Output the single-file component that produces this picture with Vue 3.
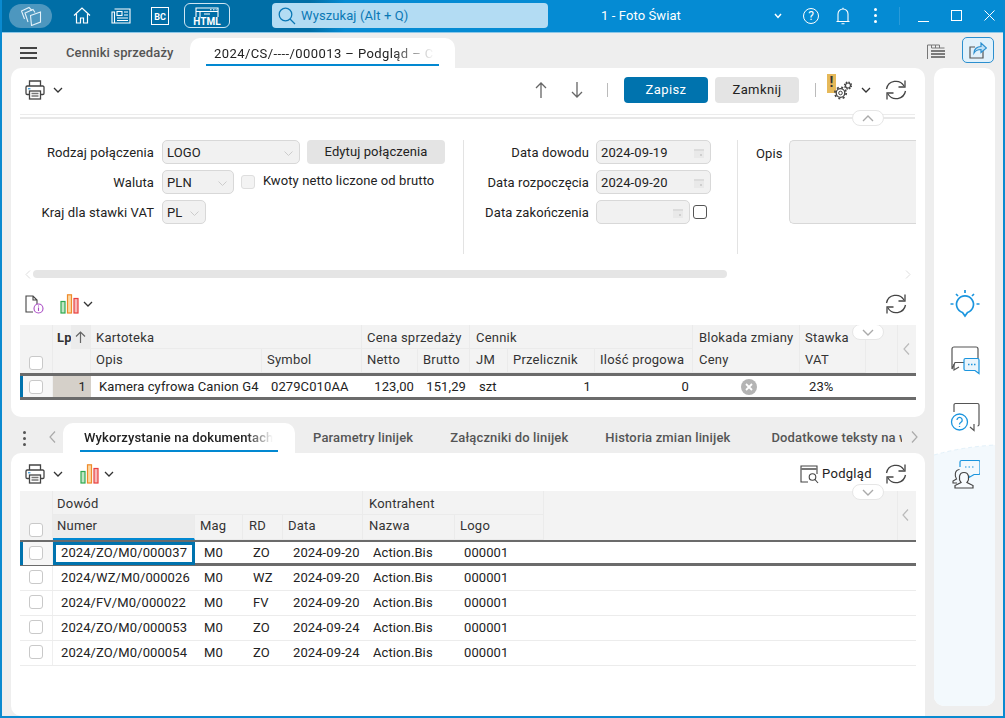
<script setup>
const upperHead = [
  { t: 'Opis' }, { t: 'Symbol' }, { t: 'Netto' }, { t: 'Brutto' },
  { t: 'JM', c: 'p6' }, { t: 'Przelicznik' }, { t: 'Ilość progowa' }, { t: 'Ceny', c: 'p6' }, { t: 'VAT' }
]
const lowerRows = [
  ['2024/ZO/M0/000037', 'M0', 'ZO', '2024-09-20', 'Action.Bis', '000001'],
  ['2024/WZ/M0/000026', 'M0', 'WZ', '2024-09-20', 'Action.Bis', '000001'],
  ['2024/FV/M0/000022', 'M0', 'FV', '2024-09-20', 'Action.Bis', '000001'],
  ['2024/ZO/M0/000053', 'M0', 'ZO', '2024-09-24', 'Action.Bis', '000001'],
  ['2024/ZO/M0/000054', 'M0', 'ZO', '2024-09-24', 'Action.Bis', '000001']
]
const lowerTabs = ['Parametry linijek', 'Załączniki do linijek', 'Historia zmian linijek']
</script>

<template>
  <div class="win">
    <svg width="0" height="0" class="defs">
      <defs>
        <symbol id="i-print" viewBox="0 0 20 20">
          <g fill="none" stroke="#444" stroke-width="1.3">
            <path d="M4.5 6V1h11v5" />
            <path d="M4.5 14.5H2.2A1.2 1.2 0 0 1 1 13.3V7.2A1.2 1.2 0 0 1 2.2 6h15.6A1.2 1.2 0 0 1 19 7.2v6.1a1.2 1.2 0 0 1-1.2 1.2h-2.3" />
            <rect x="4.5" y="11" width="11" height="8" />
            <path d="M6.5 13.5h7M6.5 16h7" stroke="#777" />
          </g>
          <rect x="3" y="8" width="2.4" height="1.4" fill="#4aa3df" />
        </symbol>
        <symbol id="i-refresh" viewBox="0 0 22 22">
          <g fill="none" stroke="#444" stroke-width="1.3">
            <path d="M1.5 10A9.5 9.5 0 0 1 19 7" />
            <path d="M20 1.5V8h-6.5" />
            <path d="M20.5 12A9.5 9.5 0 0 1 3 15" />
            <path d="M2 20.5V14h6.5" />
          </g>
        </symbol>
        <symbol id="i-chev" viewBox="0 0 10 6">
          <path d="M1 1l4 4 4-4" fill="none" stroke="#333" stroke-width="1.3" />
        </symbol>
        <symbol id="i-bars" viewBox="0 0 20 20">
          <rect x="1" y="7.5" width="4" height="11.5" fill="#bfe5c6" stroke="#2fa84f" stroke-width="1.2" />
          <rect x="7.5" y="0.8" width="4" height="18.2" fill="#fbd9a5" stroke="#ef8a2b" stroke-width="1.2" />
          <rect x="14" y="4.5" width="4" height="14.5" fill="#f7b9b9" stroke="#e8403f" stroke-width="1.2" />
        </symbol>
        <symbol id="i-pillchev" viewBox="0 0 12 7">
          <path d="M1 1l5 5 5-5" fill="none" stroke="#aaa" stroke-width="1.4" />
        </symbol>
        <symbol id="i-pillup" viewBox="0 0 12 7">
          <path d="M1 6l5-5 5 5" fill="none" stroke="#aaa" stroke-width="1.4" />
        </symbol>
        <symbol id="i-cal" viewBox="0 0 12 12">
          <path d="M1 2h10v9H1z" fill="#e9e9e9" />
          <path d="M1 2h10v2H1z" fill="#dcdcdc" />
          <rect x="7" y="7" width="2" height="2" fill="#cfcfcf" />
        </symbol>
      </defs>
    </svg>

    <header class="top">
      <button class="stack">
        <svg width="22" height="20" viewBox="0 0 22 20" fill="none" stroke="#e3f1f9" stroke-width="1.1">
          <path d="M4.5 13L1.500 5 9 1.500l3 3" />
          <path d="M8 16L5 7l8-3.500 2 3" />
          <path d="M10.500 9.500L20.500 6v10L11.500 19.500z" fill="#4d97bf" />
        </svg>
      </button>
      <svg class="home" width="18" height="17" viewBox="0 0 18 17" fill="none" stroke="#fff" stroke-width="1.2">
        <path d="M1 8.5L9 1l8 7.5" /><path d="M3.5 7v9h4v-5h3v5h4V7" />
      </svg>
      <svg class="news" width="20" height="16" viewBox="0 0 20 16" fill="none" stroke="#fff" stroke-width="1.1">
        <path d="M3.5 1H19v14H1V4h2.5v11" />
        <rect x="6" y="3.5" width="5" height="4" /><path d="M13 4h4M13 7h4M6 10h11M6 12.5h11" />
      </svg>
      <div class="bc">BC</div>
      <div class="htmlbtn">
        <svg width="24" height="13" viewBox="0 0 24 13" fill="none" stroke="#fff" stroke-width="1.1">
          <path d="M1 10V1h22v9" /><path d="M1 4.5h22M5 4.5V10M9 7h6" /><path d="M15 2.7h1.5M18 2.7h1.5M20.7 2.7h1" />
        </svg>
        <span>HTML</span>
      </div>
      <div class="search">
        <svg width="18" height="18" viewBox="0 0 18 18" fill="none" stroke="#0a78b5" stroke-width="1.3">
          <circle cx="7.5" cy="7.5" r="6.3" /><path d="M12 12l5 5" />
        </svg>
        <span>Wyszukaj (Alt + Q)</span>
      </div>
      <div class="title">1 - Foto Świat</div>
      <svg class="t-chev" width="8" height="6" viewBox="0 0 8 6"><path d="M1 1l3 3.4L7 1" fill="none" stroke="#fff" stroke-width="1.5" /></svg>
      <div class="help">?</div>
      <svg class="bell" width="14" height="18" viewBox="0 0 14 18" fill="none" stroke="#fff" stroke-width="1.1">
        <path d="M.5 14.5h13M2 14.5V7a5 5 0 0 1 10 0v7.5" /><path d="M7 2V.8M5.5 16.8h3" />
      </svg>
      <div class="dots"><i></i><i></i><i></i></div>
      <div class="t-sep"></div>
      <div class="wmin"></div>
      <div class="wmax"></div>
      <svg class="wclose" width="11" height="11" viewBox="0 0 11 11"><path d="M.5.5l10 10M10.5.5l-10 10" stroke="#fff" stroke-width="1" /></svg>
    </header>

    <div class="tabs">
      <div class="burger"><i></i><i></i><i></i></div>
      <div class="tab-inactive">Cenniki sprzedaży</div>
      <div class="tab-active">
        <span>2024/CS/----/000013 – Podgląd – Cennik</span>
      </div>
      <svg class="listicon" width="18" height="16" viewBox="0 0 18 16" fill="none" stroke="#555" stroke-width="1">
        <path d="M.5 15V1h4v3h13M4.5 1h4v3M8.5 1h4v3" stroke="#777" /><path d="M4 7h14M4 10h14M4 13h14" stroke-width="1.4" />
      </svg>
      <div class="share">
        <svg width="18" height="17" viewBox="0 0 18 17" fill="none" stroke="#2b8fcf" stroke-width="1.2">
          <path d="M14 9v7H1V5h5" stroke="#555" /><path d="M5 11c0-4 3-6.500 7-6.500V1l5.500 5L12 10.500V7.500c-3 0-5.500 1-7 3.500z" fill="#bfe0f5" />
        </svg>
      </div>
    </div>

    <div class="content">
      <main class="main">
        <section class="panel upper">
          <div class="bar1">
            <svg class="ic20"><use href="#i-print" /></svg>
            <svg class="chev ml9"><use href="#i-chev" /></svg>
            <svg class="arrow au" width="12" height="16" viewBox="0 0 12 16" fill="none" stroke="#666" stroke-width="1.3"><path d="M6 16V1M1 6l5-5 5 5" /></svg>
            <svg class="arrow ad" width="12" height="16" viewBox="0 0 12 16" fill="none" stroke="#666" stroke-width="1.3"><path d="M6 0v15M1 10l5 5 5-5" /></svg>
            <div class="vbar b1"></div>
            <button class="btn primary">Zapisz</button>
            <button class="btn">Zamknij</button>
            <div class="vbar b2"></div>
            <div class="warn">!</div>
            <svg class="gears" width="18" height="19" viewBox="0 0 18 19" fill="none" stroke="#444">
              <circle cx="6.500" cy="12" r="4.300" stroke-width="1.300" />
              <circle cx="6.500" cy="12" r="5.700" stroke-width="1.700" stroke-dasharray="2 2.480" />
              <circle cx="6.500" cy="12" r="1.800" stroke-width="1" />
              <circle cx="14" cy="4.500" r="2.500" stroke-width="1.200" />
              <circle cx="14" cy="4.500" r="3.500" stroke-width="1.300" stroke-dasharray="1.500 1.250" />
            </svg>
            <svg class="chev gchev"><use href="#i-chev" /></svg>
            <svg class="ic22 rf"><use href="#i-refresh" /></svg>
          </div>
          <div class="divider">
            <div class="pill"><svg width="12" height="7"><use href="#i-pillup" /></svg></div>
          </div>

          <div class="form">
            <div class="col1">
              <div class="frow">
                <label>Rodzaj połączenia</label>
                <div class="sel w138">LOGO<svg class="sc" width="9" height="5" viewBox="0 0 9 5"><path d="M.5.5l4 4 4-4" fill="none" stroke="#ccc" /></svg></div>
                <button class="edit">Edytuj połączenia</button>
              </div>
              <div class="frow">
                <label>Waluta</label>
                <div class="sel w72">PLN<svg class="sc" width="9" height="5" viewBox="0 0 9 5"><path d="M.5.5l4 4 4-4" fill="none" stroke="#ccc" /></svg></div>
                <span class="cb light ml7"></span>
                <span class="cbtext">Kwoty netto liczone od brutto</span>
              </div>
              <div class="frow">
                <label>Kraj dla stawki VAT</label>
                <div class="sel w44">PL<svg class="sc" width="9" height="5" viewBox="0 0 9 5"><path d="M.5.5l4 4 4-4" fill="none" stroke="#ccc" /></svg></div>
              </div>
            </div>
            <div class="col2">
              <div class="frow">
                <label>Data dowodu</label>
                <div class="date w115">2024-09-19<svg class="cal"><use href="#i-cal" /></svg></div>
              </div>
              <div class="frow">
                <label>Data rozpoczęcia</label>
                <div class="date w115">2024-09-20<svg class="cal"><use href="#i-cal" /></svg></div>
              </div>
              <div class="frow">
                <label>Data zakończenia</label>
                <div class="date w94"><svg class="cal"><use href="#i-cal" /></svg></div>
                <span class="cb dark"></span>
              </div>
            </div>
            <div class="col3">
              <span class="opis">Opis</span>
              <div class="area"></div>
            </div>
          </div>

          <div class="hscroll">
            <svg width="6" height="9" viewBox="0 0 6 9"><path d="M5 .5l-4 4 4 4" fill="none" stroke="#ddd" /></svg>
            <div class="thumb"></div>
            <svg class="hr" width="6" height="9" viewBox="0 0 6 9"><path d="M1 .5l4 4-4 4" fill="none" stroke="#ddd" /></svg>
          </div>

          <div class="bar2">
            <svg class="docinfo" width="19" height="19" viewBox="0 0 19 19" fill="none">
              <path d="M8 17H1V1h7l4 4v4M8 1v4h4" stroke="#444" stroke-width="1.100" />
              <circle cx="13.500" cy="13.500" r="4.500" stroke="#a94bc4" stroke-width="1.100" fill="#fff" />
              <path d="M13.500 12.500v3.500M13.500 10.500v1" stroke="#a94bc4" stroke-width="1.100" />
            </svg>
            <svg class="ic20 bars1"><use href="#i-bars" /></svg>
            <svg class="chev ml5 c3"><use href="#i-chev" /></svg>
            <svg class="ic22 rf2"><use href="#i-refresh" /></svg>
          </div>

          <div class="table">
            <div class="head uhead">
              <div class="h chk"><span class="cb"></span></div>
              <div class="h lp"><span>Lp</span><b><svg width="11" height="12" viewBox="0 0 11 12" fill="none" stroke="#666" stroke-width="1.200"><path d="M5.500 12V1M1 5.500l4.500-4.500 4.500 4.500" /></svg></b></div>
              <div class="h g s2">Kartoteka</div>
              <div class="h g s2">Cena sprzedaży</div>
              <div class="h g s3 p6">Cennik</div>
              <div class="h g noln p6">Blokada zmiany</div>
              <div class="h g noln">Stawka</div>
              <div class="h rs2"></div>
              <div class="h rs2 back"><svg width="7" height="12" viewBox="0 0 7 12"><path d="M6 .5L1 6l5 5.500" fill="none" stroke="#bbb" stroke-width="1.200" /></svg></div>
              <div v-for="h in upperHead" :key="h.t" class="h sub" :class="h.c">{{ h.t }}</div>
            </div>
            <div class="urow selrow">
              <div class="c chkc"><span class="cb"></span></div>
              <div class="c lpc">1</div>
              <div class="c p8">Kamera cyfrowa Canion G4</div>
              <div class="c p9">0279C010AA</div>
              <div class="c ra">123,00</div>
              <div class="c ra">151,29</div>
              <div class="c p9">szt</div>
              <div class="c ra">1</div>
              <div class="c ra">0</div>
              <div class="c ctr"><span class="xbtn"><svg width="8" height="8" viewBox="0 0 8 8"><path d="M1 1l6 6M7 1L1 7" stroke="#fff" stroke-width="1.800" /></svg></span></div>
              <div class="c p9">23%</div>
            </div>
            <div class="pill pilltable"><svg width="12" height="7"><use href="#i-pillchev" /></svg></div>
          </div>
        </section>

        <nav class="ltabs">
          <div class="ldots"><i></i><i></i><i></i></div>
          <svg class="lback" width="7" height="12" viewBox="0 0 7 12"><path d="M6 .5L1 6l5 5.500" fill="none" stroke="#aaa" stroke-width="1.200" /></svg>
          <div class="ltab-active"><span>Wykorzystanie na dokumentach</span></div>
          <div v-for="(t, i) in lowerTabs" :key="t" class="ltab" :class="{ first: i === 0 }">{{ t }}</div>
          <div class="ltab clip">Dodatkowe teksty na wydruk</div>
          <svg class="lfwd" width="7" height="12" viewBox="0 0 7 12"><path d="M1 .5L6 6l-5 5.500" fill="none" stroke="#aaa" stroke-width="1.200" /></svg>
        </nav>

        <section class="panel lower">
          <div class="bar3">
            <svg class="ic20"><use href="#i-print" /></svg>
            <svg class="chev ml9"><use href="#i-chev" /></svg>
            <svg class="ic20 bars2"><use href="#i-bars" /></svg>
            <svg class="chev ml5"><use href="#i-chev" /></svg>
            <svg class="pview" width="19" height="19" viewBox="0 0 19 19" fill="none" stroke="#444" stroke-width="1.100">
              <path d="M8 17H1V1h16v8" /><path d="M1 4h16" stroke-width="2" stroke="#777" />
              <circle cx="12.500" cy="12" r="3.300" /><path d="M15 14.500l3 3.500" />
            </svg>
            <span class="ptext">Podgląd</span>
            <svg class="ic22 rf3"><use href="#i-refresh" /></svg>
          </div>
          <div class="table t2">
            <div class="head lhead">
              <div class="h chk"><span class="cb"></span></div>
              <div class="h g s4 p4">Dowód</div>
              <div class="h g s2 p6">Kontrahent</div>
              <div class="h rs2 blank"></div>
              <div class="h rs2 back"><svg width="7" height="12" viewBox="0 0 7 12"><path d="M6 .5L1 6l5 5.500" fill="none" stroke="#bbb" stroke-width="1.200" /></svg></div>
              <div class="h sub numer p4">Numer</div>
              <div class="h sub">Mag</div>
              <div class="h sub p6">RD</div>
              <div class="h sub">Data</div>
              <div class="h sub p6">Nazwa</div>
              <div class="h sub">Logo</div>
            </div>
            <div v-for="(r, i) in lowerRows" :key="r[0]" class="lrow" :class="{ selrow: i === 0 }">
              <div class="c chkc"><span class="cb"></span></div>
              <div class="c p8 num" :class="{ focus: i === 0 }">{{ r[0] }}</div>
              <div class="c p9">{{ r[1] }}</div>
              <div class="c p10">{{ r[2] }}</div>
              <div class="c p10">{{ r[3] }}</div>
              <div class="c p10">{{ r[4] }}</div>
              <div class="c p9">{{ r[5] }}</div>
            </div>
            <div class="pill pilltable p2"><svg width="12" height="7"><use href="#i-pillchev" /></svg></div>
          </div>
        </section>
      </main>

      <aside class="aside">
        <svg class="wave" width="61" height="262" viewBox="0 0 61 262" preserveAspectRatio="none">
          <path d="M0 11Q28 3 61 1V262H0z" fill="#f3f9fd" />
          <path d="M0 11Q28 3 61 1" fill="none" stroke="#e3f1fa" stroke-dasharray="4 3" />
        </svg>
        <svg class="sico" width="30" height="30" viewBox="0 0 30 30" fill="none" stroke="#1b95de" stroke-width="1.700">
          <path d="M12.500 24.500A8.500 8.500 0 1 1 17.500 24.500L15 28z" />
          <path d="M15 2v3M6 6l2 2M24 6l-2 2M.5 16h3M26.500 16h3" />
        </svg>
        <svg class="sico" width="30" height="30" viewBox="0 0 30 30" fill="none">
          <path d="M16 17.500H6L3 24V4a2 2 0 0 1 2-2h22a2 2 0 0 1 2 2v10" stroke="#555" stroke-width="1.200" transform="translate(-1 0)" />
          <path d="M4 19v6l5-3" stroke="#555" stroke-width="1.200" />
          <path d="M14 15a1.500 1.500 0 0 1 1.500-1.500h12A1.500 1.500 0 0 1 29 15v9h0v4.500l-4-3H15.500A1.500 1.500 0 0 1 14 24z" stroke="#1b95de" stroke-width="1.200" fill="#eaf5fc" />
          <path d="M18 19.500h1.500M21 19.500h1.500M24 19.500h1.500" stroke="#1b95de" stroke-width="1.400" />
        </svg>
        <svg class="sico" width="30" height="30" viewBox="0 0 30 30" fill="none">
          <path d="M4 10V3a1.500 1.500 0 0 1 1.500-1.500h22A1.500 1.500 0 0 1 29 3v19.500a1.500 1.500 0 0 1-1.500 1.500" stroke="#555" stroke-width="1.200" />
          <path d="M24 22v6.500l-4-3.500" stroke="#555" stroke-width="1.200" />
          <circle cx="9.500" cy="20" r="8" stroke="#1b95de" stroke-width="1.300" fill="#fff" />
          <path d="M7 18a2.600 2.600 0 1 1 4 2.200c-1 .7-1.500 1-1.500 2.300M9.500 24v1" stroke="#1b95de" stroke-width="1.300" />
        </svg>
        <svg class="sico" width="30" height="30" viewBox="0 0 30 30" fill="none">
          <path d="M10 8V3a1.500 1.500 0 0 1 1.500-1.500h17A1.500 1.500 0 0 1 30 3v11a1.500 1.500 0 0 1-1.500 1.500H24l-5 3v-2" stroke="#1b95de" stroke-width="1.200" />
          <path d="M15 8h1.500M18.500 8H20M22 8h1.500" stroke="#1b95de" stroke-width="1.200" />
          <path d="M7 24h-4v-2l3.500-2c-2-3-2-9 3-9.500" stroke="#444" stroke-width="1.100" />
          <path d="M5 29v-2.500l6-3c-2.500-3-2.500-10 3-10s5.500 7 3 10l6 3V29z" stroke="#444" stroke-width="1.200" fill="#f7fbfe" />
        </svg>
      </aside>
    </div>
  </div>
</template>

<style>
html, body { margin: 0; }
</style>

<style scoped>
* { box-sizing: border-box; }
.defs { position: absolute; }
.win {
  width: 1005px; height: 718px; display: flex; flex-direction: column; overflow: hidden;
  border: solid #0a8ad0; border-width: 0 2px 2px 2px;
  background: #eeeeee; color: #222;
  font: 13px/16px Roboto, "Noto Sans", sans-serif; letter-spacing: 0.1px;
}
button { font: inherit; letter-spacing: inherit; border: 0; padding: 0; }

/* top bar */
.top {
  height: 33px; flex: none; margin: 0 -2px; display: flex; align-items: center; padding-bottom: 1px; color: #fff;
  background: linear-gradient(90deg, #006ea6 0, #006ea6 310px, #058bd3 345px);
  border-bottom: 1px solid #8cc7e8;
}
.stack { width: 43px; height: 24px; margin-left: 9px; border-radius: 12px; background: #4d97bf; display: flex; align-items: center; justify-content: center; }
.home { margin-left: 21px; }
.news { margin-left: 20px; }
.bc { margin-left: 20px; width: 18px; height: 18px; border: 1px solid #fff; font-size: 9px; font-weight: 700; line-height: 18px; text-align: center; letter-spacing: 0; }
.htmlbtn { margin-left: 15px; width: 46px; height: 25px; border: 1px solid #cfe6f3; border-radius: 6px; display: flex; flex-direction: column; align-items: center; padding-top: 3px; }
.htmlbtn span { font-size: 10px; line-height: 9px; font-weight: 700; letter-spacing: 0; margin-top: -3px; }
.search { margin-left: 42px; width: 276px; height: 25px; border-radius: 4px; background: #b3dcf3; display: flex; align-items: center; padding-left: 6px; gap: 5px; color: #0a78b5; }
.title { margin-left: 53px; width: 166px; font-size: 13px; letter-spacing: 0.1px; flex: none; }
.t-chev { margin-left: 7px; }
.help { margin-left: 21px; width: 16px; height: 16px; border: 1px solid #fff; border-radius: 50%; font-size: 12px; line-height: 14px; text-align: center; letter-spacing: 0; flex: none; }
.bell { margin-left: 17px; }
.dots { margin-left: 24px; width: 3px; display: flex; flex-direction: column; gap: 3px; }
.dots i { width: 3px; height: 3px; background: #fff; border-radius: 50%; }
.t-sep { margin-left: 22px; width: 1px; height: 18px; background: #2a9bd9; }
.wmin { margin-left: 18px; margin-top: 12px; width: 11px; height: 1px; background: #fff; }
.wmax { margin-left: 22px; width: 11px; height: 11px; border: 1px solid #fff; }
.wclose { margin-left: 22px; }

/* tabs */
.tabs { height: 35px; flex: none; display: flex; position: relative; }
.burger { margin: 14px 0 0 18px; width: 17px; display: flex; flex-direction: column; gap: 3px; }
.burger i { height: 2px; background: #444; display: block; }
.tab-inactive { margin: 12px 0 0 29px; width: 124px; font-weight: 500; color: #555; }
.tab-active { margin-top: 5px; width: 265px; height: 30px; background: #fff; border-radius: 10px 10px 0 0; padding: 0 16px; position: relative; }
.tab-active span {
  display: block; height: 28px; line-height: 18px; padding: 7px 0 0 8px; white-space: nowrap; overflow: hidden; color: #222; letter-spacing: 0.42px;
  -webkit-mask-image: linear-gradient(90deg, #000 80%, transparent 98%);
  mask-image: linear-gradient(90deg, #000 80%, transparent 98%);
}
.tab-active::after { content: ""; position: absolute; left: 16px; right: 16px; bottom: 2px; height: 2px; background: #0288d1; }
.listicon { margin: 11px 0 0 472px; }
.share { margin: 4px 0 0 17px; width: 32px; height: 26px; border: 1px solid #2b8fcf; border-radius: 5px; background: #e1f1fb; display: flex; align-items: center; justify-content: center; }

/* content */
.content { flex: 1; min-height: 0; display: flex; padding-left: 9px; gap: 9px; }
.main { width: 914px; flex: none; display: flex; flex-direction: column; }
.panel { background: #fff; border-radius: 10px; position: relative; padding-left: 9px; }
.upper { height: 349px; flex: none; }
.lower { flex: 1; border-radius: 10px 10px 0 10px; }
.aside { width: 61px; flex: none; margin-bottom: 10px; background: #fff; border-radius: 10px; position: relative; overflow: hidden; display: flex; flex-direction: column; align-items: center; padding-top: 220px; gap: 27px; }
.wave { position: absolute; left: 0; bottom: 0; }
.sico { position: relative; flex: none; }

svg { display: block; flex: none; }
.ic20 { width: 20px; height: 20px; }
.ic22 { width: 22px; height: 22px; }
.chev { width: 10px; height: 6px; }
.ml9 { margin-left: 8px; }
.ml5 { margin-left: 4px; }
.c3 { margin-left: 3px; }

.bar1 { height: 44px; display: flex; align-items: center; padding-left: 5px; }
.au { margin-left: 472px; }
.ad { margin-left: 24px; }
.vbar { width: 1px; height: 14px; background: #bbb; }
.b1 { margin-left: 24px; }
.btn { width: 84px; height: 26px; border-radius: 4px; background: #e4e4e4; color: #222; margin-left: 7px; letter-spacing: 0.4px; }
.primary { background: #0073ae; color: #fff; margin-left: 16px; }
.b2 { margin-left: 16px; }
.warn { margin-left: 11px; width: 9px; height: 19px; background: #e6b95a; color: #333; font-weight: 700; font-size: 14px; line-height: 17px; text-align: center; align-self: flex-start; margin-top: 6px; letter-spacing: 0; }
.gears { margin-left: -2px; margin-top: 1px; }
.gchev { margin-left: 9px; }
.rf { margin-left: 14px; }

.divider { height: 5px; margin-top: 2px; width: 895px; margin-left: 0; border-top: 1px solid #ececec; border-bottom: 2px solid #e8e8e8; position: relative; }
.pill { position: absolute; width: 32px; height: 16px; border: 1px solid #e6e6e6; border-radius: 8px; background: #fff; display: flex; align-items: center; justify-content: center; z-index: 2; }
.divider .pill { left: 832px; top: -5px; }

.form { margin-top: 21px; width: 896px; height: 114px; display: flex; overflow: hidden; }
.frow { display: flex; align-items: center; height: 24px; margin-bottom: 6px; }
label { text-align: right; flex: none; white-space: nowrap; padding-top: 1px; }
.col1 { width: 443px; flex: none; }
.col1 label { width: 134px; margin-right: 8px; }
.sel, .date { height: 24px; background: #f1f1f1; border: 1px solid #d8d8d8; border-radius: 5px; padding-left: 4px; line-height: 24px; flex: none; position: relative; }
.sc { position: absolute; right: 6px; top: 10px; }
.w138 { width: 138px; }
.w72 { width: 72px; }
.w44 { width: 44px; }
.edit { margin-left: 7px; width: 138px; height: 24px; background: #e4e4e4; border-radius: 4px; color: #222; }
.cb { display: inline-block; width: 14px; height: 14px; border: 1px solid #c9c9c9; border-radius: 3px; background: #fff; flex: none; }
.light { background: #f3f3f3; border-color: #dedede; }
.dark { border-color: #555; margin-left: 3px; }
.ml7 { margin-left: 7px; }
.cbtext { margin-left: 8px; margin-top: -3px; }
.col2 { width: 274px; flex: none; border-left: 1px solid #e3e3e3; }
.col2 label { width: 125px; margin-right: 7px; }
.date { padding-left: 4px; }
.w115 { width: 115px; }
.w94 { width: 94px; }
.cal { position: absolute; right: 5px; top: 6px; width: 12px; height: 12px; }
.col3 { flex: 1; border-left: 1px solid #e3e3e3; display: flex; min-width: 0; padding-left: 18px; }
.opis { width: 33px; flex: none; padding-top: 6px; }
.area { flex: 1; height: 84px; background: #f1f1f1; border: 1px solid #d8d8d8; border-right: 0; border-radius: 5px 0 0 5px; }

.hscroll { margin-top: 16px; height: 8px; display: flex; align-items: center; padding-left: 5px; }
.thumb { margin-left: 2px; width: 694px; height: 8px; border-radius: 4px; background: #e5e5e5; }
.hr { margin-left: 178px; }

.bar2 { margin-top: 15px; height: 22px; display: flex; align-items: center; padding-left: 5px; }
.bars1 { margin-left: 16px; }
.rf2 { margin-left: 792px; }

.table { margin-top: 10px; width: 896px; position: relative; overflow: hidden; }
.head { display: grid; grid-template-rows: 24px 24px; background: #f3f3f3; }
.uhead { grid-template-columns: 33px 38px 171px 100px 56px 52px 38px 87px 98px 107px 66px 32px 32px 18px; height: 48px; }
.lhead { grid-template-columns: 33px 142px 48px 40px 80px 92px 89px 354px 18px; height: 49px; grid-template-rows: 24px 25px; }
.h { color: #333; padding: 0 5px; line-height: 26px; white-space: nowrap; border-right: 1px solid #ebebeb; border-bottom: 1px solid #ebebeb; letter-spacing: 0.22px; }
.h.p6 { padding-left: 6px; }
.h.p4 { padding-left: 4px; }
.chk { grid-row: 1 / span 2; display: flex; align-items: flex-end; padding: 0 0 3px 9px; border-bottom: 0; }
.lp { grid-row: 1 / span 2; display: flex; padding: 0 0 0 4px; border-bottom: 0; position: relative; font-weight: 700; letter-spacing: 0.2px; }
.lp b { position: absolute; right: 0; top: 0; width: 19px; height: 24px; background: #ececec; display: flex; align-items: center; justify-content: center; }
.s2 { grid-column: span 2; }
.s3 { grid-column: span 3; }
.s4 { grid-column: span 4; }
.noln { border-bottom: 0; }
.rs2 { grid-row: 1 / span 2; border-bottom: 0; }
.uhead .rs2:not(.back) { grid-column: 12 / span 1; }
.uhead .back { grid-column: 13 / span 2; padding-left: 5px; }
.back { display: flex; align-items: flex-start; padding: 18px 0 0 4px; border-right: 0; border-left: 0; }
.lhead .back { grid-column: 9; padding-left: 4px; }
.uhead .back { padding: 18px 0 0 5px; }
.lhead .blank { grid-column: 8; }
.lhead .s2 { grid-column: 6 / span 2; }
.numer { background: #ececec; border-bottom: 2px solid #0288d1; margin-left: 0; }
.h.sub { line-height: 22px; }

.c { line-height: 20px; white-space: nowrap; overflow: hidden; }
.urow, .lrow { display: grid; align-items: stretch; background: #fff; }
.urow { grid-template-columns: 33px 38px 171px 100px 56px 52px 38px 87px 98px 107px 66px; height: 27px; width: 896px; }
.lrow { grid-template-columns: 33px 142px 48px 40px 80px 92px 89px; height: 25px; width: 896px; border-bottom: 1px solid #ececec; }
.selrow { border-top: 3px solid #6b6b6b; border-bottom: 3px solid #6b6b6b; position: relative; }
.lrow.selrow { height: 26px; border-top-width: 2px; }
.selrow .c { line-height: 21px; }
.selrow .chkc { border-left: 3px solid #0073ae; padding-left: 6px; }
.chkc { padding: 4px 0 0 9px; border-right: 1px solid #efefef; display: block; line-height: 0; }
.selrow .chkc { padding-top: 3px; background: #f6f6f6; }
.lrow .c:not(.chkc):not(.focus) { line-height: 24px; }
.lrow.selrow .c:not(.chkc):not(.focus) { line-height: 22px; }
.lpc { background: #d5d0c9; text-align: right; padding-right: 5px; }
.p8 { padding-left: 8px; }
.p9 { padding-left: 9px; }
.p10 { padding-left: 10px; }
.ra { text-align: right; padding-right: 4px; }
.ctr { display: flex; justify-content: center; align-items: center; padding-left: 5px; }
.xbtn { width: 16px; height: 16px; border-radius: 50%; background: #b4b4b4; display: flex; align-items: center; justify-content: center; }
.selrow .focus { border: 3px solid #0073ae; background: #fff; padding-left: 5px; line-height: 15px; height: 23px; position: relative; z-index: 1; }
.pilltable { right: 32px; top: -1px; }
.pilltable.p2 { top: -7px; }
.t2 { overflow: visible; margin-top: 6px; }

.ltabs { height: 36px; flex: none; display: flex; align-items: flex-start; }
.ldots { margin: 14px 0 0 12px; width: 3px; display: flex; flex-direction: column; gap: 3px; }
.ldots i { width: 3px; height: 3px; background: #555; border-radius: 50%; }
.lback { margin: 14px 0 0 23px; }
.ltab-active { margin: 6px 0 0 7px; width: 232px; height: 30px; background: #fff; border-radius: 10px 10px 0 0; position: relative; padding: 7px 22px 0 21px; font-weight: 500; white-space: nowrap; letter-spacing: 0.15px; }
.ltab-active span { display: block; overflow: hidden; -webkit-mask-image: linear-gradient(90deg, #000 86%, transparent 100%); mask-image: linear-gradient(90deg, #000 86%, transparent 100%); }
.ltab-active::after { content: ""; position: absolute; left: 17px; right: 17px; bottom: 1px; height: 2px; background: #0288d1; }
.ltab { margin-top: 13px; font-weight: 500; color: #555; white-space: nowrap; flex: none; margin-left: 37px; letter-spacing: 0.15px; }
.ltab.first { margin-left: 18px; }
.ltab.clip { width: 131px; overflow: hidden; margin-left: 41px; }
.lfwd { margin: 14px 0 0 9px; }

.bar3 { padding: 10px 0 0 5px; height: 32px; display: flex; align-items: center; }
.bars2 { margin-left: 17px; }
.pview { margin-left: 686px; }
.ptext { margin-left: 3px; width: 50px; flex: none; letter-spacing: 0.3px; }
.rf3 { margin-left: 13px; }
</style>
